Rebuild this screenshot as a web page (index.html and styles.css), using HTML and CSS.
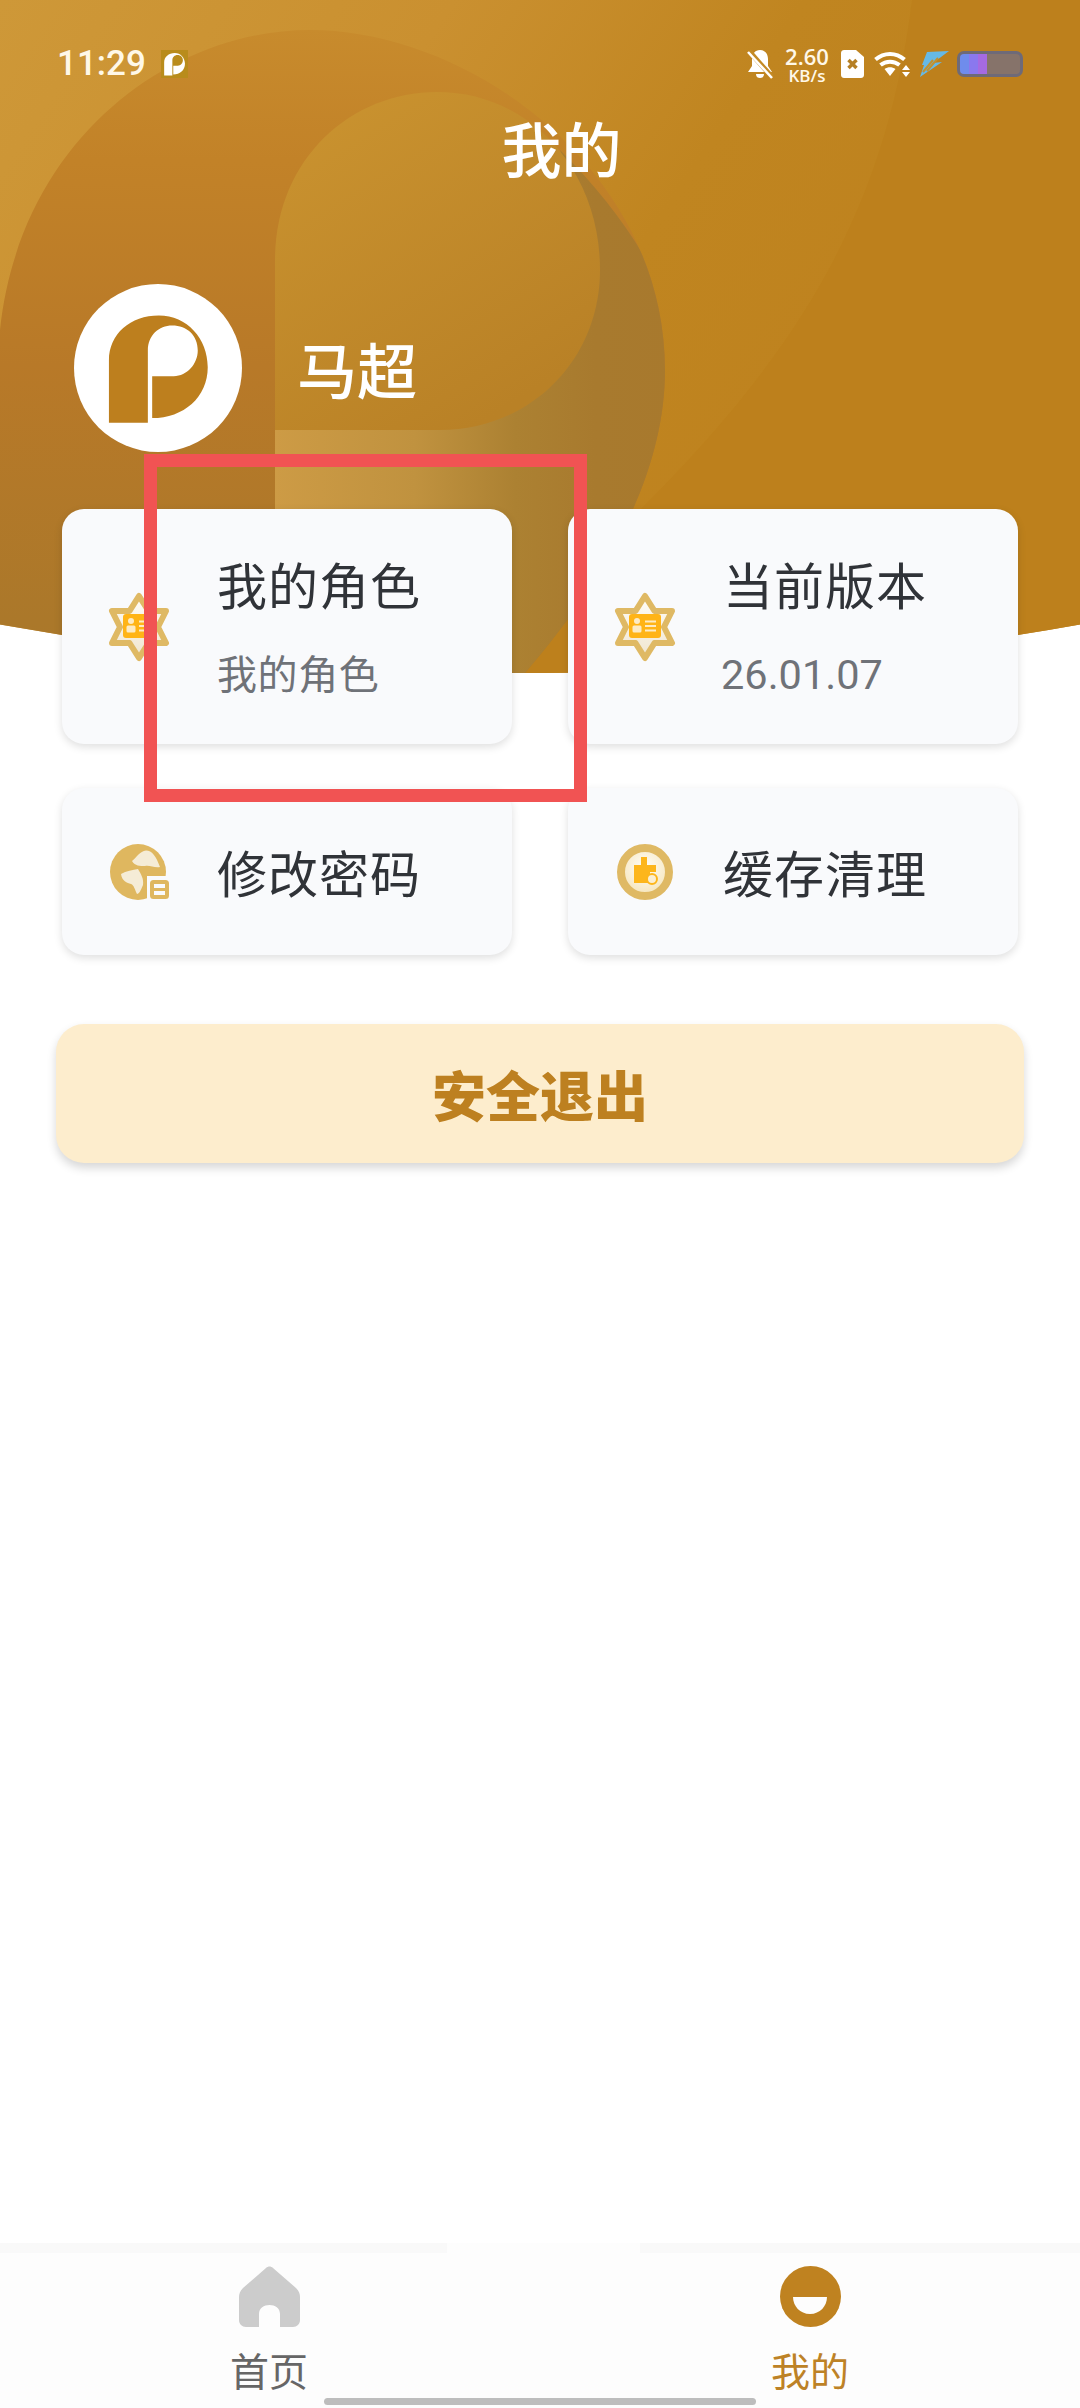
FILE: index.html
```html
<!DOCTYPE html>
<html lang="zh-CN">
<head>
<meta charset="utf-8">
<title>我的</title>
<link rel="stylesheet" href="styles.css">
</head>
<body>
<div class="page">
  <svg class="hero-bg" viewBox="0 0 1080 730" width="1080" height="730" aria-hidden="true">
    <defs>
      <linearGradient id="base" x1="0" y1="0" x2="1" y2="0.45">
        <stop offset="0" stop-color="#ce9838"/>
        <stop offset="0.35" stop-color="#ca9030"/>
        <stop offset="0.62" stop-color="#c08520"/>
        <stop offset="1" stop-color="#bd801d"/>
      </linearGradient>
      <linearGradient id="outerdown" x1="0" y1="0" x2="0" y2="1">
        <stop offset="0" stop-color="#c98d2e"/>
        <stop offset="0.22" stop-color="#c28228"/>
        <stop offset="0.5" stop-color="#b87928"/>
        <stop offset="0.85" stop-color="#ab782a"/>
        <stop offset="1" stop-color="#a8782b"/>
      </linearGradient>
      <linearGradient id="stem" gradientUnits="userSpaceOnUse" x1="275" y1="0" x2="675" y2="0">
        <stop offset="0" stop-color="#cd9b45"/>
        <stop offset="0.35" stop-color="#c0923f"/>
        <stop offset="0.6" stop-color="#ac8132"/>
        <stop offset="0.8" stop-color="#a87a2e"/>
        <stop offset="1" stop-color="#a8792d"/>
      </linearGradient>
      <linearGradient id="bowl" x1="0" y1="0" x2="0.6" y2="1">
        <stop offset="0" stop-color="#cb9430"/>
        <stop offset="1" stop-color="#b98126"/>
      </linearGradient>
      <clipPath id="heroclip"><path d="M0 0H1080V624.500Q540 721.500 0 624.500Z"/></clipPath>
      <clipPath id="outerclip"><path d="M0 730V330C20 140 170 30 310 30C470 30 665 170 665 370C665 480 600 590 510 690L480 730Z"/></clipPath>
    </defs>
    <g clip-path="url(#heroclip)">
      <rect width="1080" height="730" fill="url(#base)"/>
      <path d="M912 0C885 220 790 360 640 510L510 690V730H1080V0Z" fill="#bd801c"/>
      <g clip-path="url(#outerclip)">
        <rect width="1080" height="730" fill="url(#outerdown)"/>
        <path d="M560 150C630 220 680 300 680 370V730H275V413L500 400L598 260Z" fill="url(#stem)"/>
      </g>
      <path d="M275 430V260C275 160 350 92 437 92C530 92 600 170 600 270C600 360 530 430 440 430Z" fill="url(#bowl)"/>
    </g>
  </svg>

  <header class="status-bar">
    <div class="status-left">
      <span class="clock">11:29</span>
      <span class="app-badge">
        <svg viewBox="100 100 385 385" width="27" height="28"><path class="logo-white" d="M145 457V270C145 190 210 135 295 135C380 135 442 205 442 290C442 380 370 443 275 443V317H340C380 317 412 280 412 240C412 195 380 165 335 165C295 165 262 195 262 240V457Z"/></svg>
      </span>
    </div>
    <div class="status-right">
      <svg class="bell" viewBox="0 0 26 30" width="26" height="30">
        <path class="fill-white" d="M13 1C18 1 21 5 21 10V17L25 23H1L5 17V10C5 5 8 1 13 1ZM9 25H17C17 28 15 29 13 29C11 29 9 28 9 25Z"/>
        <path class="bell-cut" d="M2 2L25 28"/>
        <path class="bell-slash" d="M1 3L25 29"/>
      </svg>
      <div class="speed"><span class="speed-num">2.60</span><span class="speed-unit">KB/s</span></div>
      <svg class="sim" viewBox="0 0 23 28" width="23" height="28">
        <path class="fill-white" d="M3 0H15L23 7V25C23 27 21.500 28 20 28H3C1.500 28 0 27 0 25V3C0 1 1.500 0 3 0Z"/>
        <path class="sim-x" d="M7.500 10L15.500 18M15.500 10L7.500 18"/>
      </svg>
      <svg class="wifi" viewBox="0 0 36 28" width="36" height="28">
        <path class="wifi-arc" d="M1.500 9.500C10 2 22 2 30.500 9.500"/>
        <path class="wifi-arc" d="M6.500 15C12 10.500 20 10.500 25.500 15"/>
        <path class="fill-white" d="M10.500 19C14 16.500 18 16.500 21.500 19L16 26Z"/>
        <path class="fill-white" d="M32 15L36 20H28ZM28 22H36L32 27Z"/>
      </svg>
      <svg class="bolt" viewBox="0 0 30 28" width="30" height="28">
        <path class="bolt-blue" d="M7 2L29 1L13 13L22 12L0 27L4 15L2 15Z"/>
        <path class="bolt-line" d="M3 22L13 10M7 21L18 8"/>
      </svg>
      <div class="battery">
        <span class="cell cell-blue"></span><span class="cell cell-violet"></span><span class="cell cell-purple"></span>
      </div>
    </div>
  </header>

  <h1 class="page-title">我的</h1>

  <section class="profile">
    <div class="avatar">
      <svg viewBox="40 40 505 505" width="168" height="168">
        <circle cx="292.500" cy="292.500" r="252.500" class="fill-white"/>
        <path class="logo-gold" d="M145 457V270C145 190 210 135 295 135C380 135 442 205 442 290C442 380 370 443 275 443V317H340C380 317 412 280 412 240C412 195 380 165 335 165C295 165 262 195 262 240V457Z"/>
      </svg>
    </div>
    <span class="user-name">马超</span>
  </section>

  <section class="menu-grid">
    <article class="card">
      <svg class="card-icon" viewBox="0 0 62 70" width="62" height="70">
        <use href="#star-icon"/>
      </svg>
      <div class="card-text">
        <div class="card-title">我的角色</div>
        <div class="card-sub">我的角色</div>
      </div>
    </article>
    <article class="card">
      <svg class="card-icon" viewBox="0 0 62 70" width="62" height="70">
        <defs>
          <linearGradient id="starfill" x1="0" y1="0" x2="0" y2="1">
            <stop offset="0" stop-color="#fffdf8"/>
            <stop offset="1" stop-color="#efe5cf"/>
          </linearGradient>
          <g id="star-icon">
            <path class="star" d="M31 4L40.500 19L58 19L50 35L58 51L40.500 51L31 66L21.500 51L4 51L12 35L4 19L21.500 19Z"/>
            <rect class="id-card" x="15" y="22" width="32" height="24" rx="3"/>
            <circle class="id-mark" cx="23" cy="29" r="3"/>
            <rect class="id-mark" x="18.500" y="33.500" width="9" height="7" rx="1.500"/>
            <path class="id-lines" d="M31 29.500H42M31 34H42M31 38.500H42"/>
          </g>
        </defs>
        <use href="#star-icon"/>
      </svg>
      <div class="card-text">
        <div class="card-title">当前版本</div>
        <div class="card-version">26.01.07</div>
      </div>
    </article>
    <article class="card">
      <svg class="card-icon" viewBox="0 0 62 62" width="62" height="62">
        <circle class="tan" cx="30" cy="31" r="28"/>
        <path class="land" d="M24 20C28 17 32 10 38 9.500C44 9.500 48 15 52 26C46 27 42 24 37 25C32 25 27 25 24 20Z"/>
        <path class="land" d="M13 33C18 30 25 29 30 28C33 33 36 38 35 44C33 49 31 53 29 53C27 49 26 44 23 43C19 42 14 40 13 33Z"/>
        <rect class="notch" x="39" y="35" width="24" height="27"/>
        <rect class="doc" x="44" y="41" width="15" height="15" rx="1.500"/>
        <path class="doc-line" d="M46 48.500H57"/>
      </svg>
      <div class="card-text">
        <div class="card-title">修改密码</div>
      </div>
    </article>
    <article class="card">
      <svg class="card-icon" viewBox="0 0 62 62" width="62" height="62">
        <defs>
          <radialGradient id="ringfill" cx="0.5" cy="0.4" r="0.6">
            <stop offset="0" stop-color="#fffef9"/>
            <stop offset="1" stop-color="#f5e4b9"/>
          </radialGradient>
        </defs>
        <circle class="ring" cx="31" cy="31" r="24"/>
        <path class="broom" d="M27 16H33V24H42V31H36V42H20V24H27Z"/>
        <circle class="clock-mini" cx="38" cy="38" r="5"/>
      </svg>
      <div class="card-text">
        <div class="card-title">缓存清理</div>
      </div>
    </article>
  </section>

  <button class="logout" type="button">安全退出</button>

  <nav class="tab-bar">
    <div class="tab">
      <svg viewBox="0 0 61 61" width="61" height="61">
        <path class="home" d="M27 2C29 0 32 0 34 2L57 22C60 25 61 28 61 31V54C61 58 58 61 54 61H41V48C41 42 36 39 30.500 39C25 39 20 42 20 48V61H7C3 61 0 58 0 54V31C0 28 1 25 4 22Z"/>
      </svg>
      <span class="tab-label">首页</span>
    </div>
    <div class="tab tab-active">
      <svg viewBox="0 0 61 61" width="61" height="61">
        <circle class="me" cx="30.500" cy="30.500" r="30.500"/>
        <path class="smile" d="M13 31H47C47 40 40 48 30 48C20 48 13 40 13 31Z"/>
      </svg>
      <span class="tab-label">我的</span>
    </div>
  </nav>

  <div class="home-bar"></div>
  <div class="annotation"></div>
</div>
</body>
</html>
```
FILE: styles.css
```css
* { box-sizing: border-box; }
html, body { margin: 0; padding: 0; background: #fff; }
body { font-family: "Noto Sans CJK SC", "Noto Sans", sans-serif; }

.page {
  position: relative;
  width: 1080px;
  height: 2408px;
  overflow: hidden;
  display: flex;
  flex-direction: column;
  background: #fff;
}
.hero-bg { position: absolute; left: 0; top: 0; }

.fill-white { fill: #fff; }
.logo-white { fill: #fff; }
.logo-gold { fill: #bd7f1e; }

.status-bar {
  position: relative;
  margin-top: 46px;
  height: 36px;
  padding: 0 57px;
  display: flex;
  justify-content: space-between;
  align-items: center;
}
.status-left { display: flex; align-items: center; gap: 15px; }
.clock {
  font-family: Roboto, sans-serif;
  font-weight: 500;
  font-size: 35px;
  line-height: 36px;
  color: #fff8e8;
}
.app-badge {
  width: 27px;
  height: 28px;
  background: #b98c1c;
  display: flex;
}
.status-right { display: flex; align-items: center; gap: 10px; }
.bell-cut { stroke: #c48a24; stroke-width: 5; fill: none; }
.bell-slash { stroke: #fff; stroke-width: 2.500; fill: none; }
.speed {
  width: 46px;
  display: flex;
  flex-direction: column;
  align-items: center;
  font-family: "Open Sans", sans-serif;
  font-weight: 600;
  color: #fff8e8;
  margin: 0 1px;
}
.speed-num { font-size: 22px; line-height: 22px; }
.speed-unit { font-size: 17px; line-height: 17px; }
.sim-x { stroke: #b57f24; stroke-width: 3.500; fill: none; }
.wifi-arc { stroke: #fff; stroke-width: 4; fill: none; }
.bolt-blue { fill: #66b9e6; }
.bolt-line { stroke: #c2912f; stroke-width: 2; fill: none; }
.battery {
  width: 66px;
  height: 26px;
  margin-left: -3px;
  border: 3px solid #6e6a78;
  border-radius: 7px;
  background: #86736a;
  display: flex;
  overflow: hidden;
}
.cell { width: 9px; }
.cell-blue { background: #6f8cec; }
.cell-violet { background: #8a78ee; }
.cell-purple { background: #a56ae2; }

.page-title {
  position: relative;
  margin: 25px 0 0;
  padding-left: 43px;
  height: 80px;
  line-height: 80px;
  text-align: center;
  font-size: 60px;
  font-weight: 500;
  color: #fff;
}

.profile {
  position: relative;
  margin-top: 97px;
  padding-left: 74px;
  height: 168px;
  display: flex;
  align-items: center;
  gap: 55px;
}
.avatar { width: 168px; height: 168px; display: flex; }
.user-name { font-size: 60px; line-height: 80px; color: #fff; font-weight: 500; }

.menu-grid {
  position: relative;
  margin-top: 57px;
  padding-left: 62px;
  display: grid;
  grid-template-columns: 450px 450px;
  grid-template-rows: 235px 167px;
  column-gap: 56px;
  row-gap: 44px;
}
.card {
  display: flex;
  align-items: center;
  gap: 47px;
  padding-left: 46px;
  background: #f9fafc;
  border-radius: 22px;
  box-shadow: 0 3px 8px rgba(0, 0, 0, 0.13);
}
.card-icon { flex: none; }
.card-text { display: flex; flex-direction: column; gap: 33px; padding-bottom: 2px; }
.card-title { font-size: 50px; line-height: 60px; letter-spacing: 1px; color: #303338; }
.card-sub { font-size: 40px; line-height: 52px; letter-spacing: 0.6px; color: #6f7278; }
.card-version { font-family: Roboto, sans-serif; font-size: 41.500px; line-height: 52px; color: #6f7278; margin: 3px 0 -3px -2px; }

.star { fill: url(#starfill); stroke: #dfb964; stroke-width: 6; stroke-linejoin: round; }
.id-card { fill: #ffb416; }
.id-mark { fill: #fdebc4; }
.id-lines { stroke: #fdebc4; stroke-width: 2; fill: none; }
.tan { fill: #dfb75f; }
.land { fill: #f5ecd6; }
.notch { fill: #f9fafc; }
.doc { fill: #f9fafc; stroke: #dfb75f; stroke-width: 4; }
.doc-line { stroke: #dfb75f; stroke-width: 3; fill: none; }
.ring { fill: url(#ringfill); stroke: #dfb964; stroke-width: 8; }
.broom { fill: #fdb61b; }
.clock-mini { fill: #fbefd2; stroke: #fdb61b; stroke-width: 2; }

.logout {
  display: block;
  margin: 69px 0 0 56px;
  width: 968px;
  height: 139px;
  border: 0;
  padding: 0;
  border-radius: 28px;
  background: #fdedcd;
  box-shadow: 0 5px 10px rgba(0, 0, 0, 0.16);
  font-family: inherit;
  font-size: 54px;
  font-weight: 900;
  color: #bd8020;
}

.tab-bar {
  margin-top: auto;
  height: 165px;
  padding-top: 23px;
  display: flex;
  justify-content: space-between;
  padding-left: 229px;
  padding-right: 230px;
  background:
    linear-gradient(#f9f9f9, #f9f9f9) 0 0 / 447px 10px no-repeat,
    linear-gradient(#f9f9f9, #f9f9f9) 640px 0 / 440px 10px no-repeat,
    #fdfdfd;
}
.tab {
  width: 80px;
  display: flex;
  flex-direction: column;
  align-items: center;
  gap: 17px;
}
.tab-label { font-size: 39px; line-height: 50px; color: #666; }
.tab-active .tab-label { color: #bd8226; }
.home { fill: #cccccc; }
.me { fill: #bf8220; }
.smile { fill: #fdfdfd; }

.home-bar {
  position: absolute;
  left: 324px;
  top: 2398px;
  width: 432px;
  height: 7px;
  border-radius: 4px;
  background: #bdbdbd;
}
.annotation {
  position: absolute;
  left: 144px;
  top: 454px;
  width: 443px;
  height: 348px;
  border: 13.500px solid #f15353;
}
```
